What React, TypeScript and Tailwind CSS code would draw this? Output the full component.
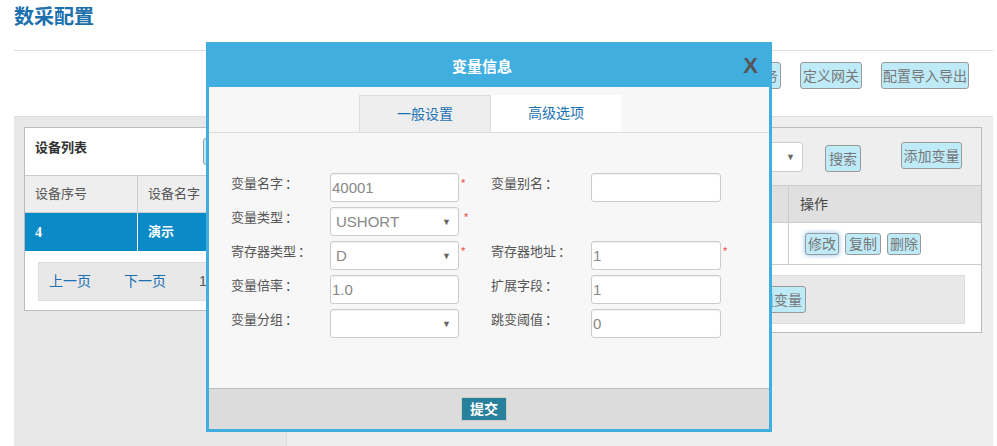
import React from "react";

const font = "font-['Liberation_Sans','Noto_Sans_CJK_SC',sans-serif]";
const cyanBtn =
  "rounded-[3px] border border-[#999] bg-[#bfeaf7] text-[14px] leading-none text-[#777]";

type Field = {
  label: string;
  value: string;
  select?: boolean;
  required?: boolean;
};

const rows: [Field, Field | null][] = [
  [
    { label: "变量名字", value: "40001", required: true },
    { label: "变量别名", value: "" },
  ],
  [{ label: "变量类型", value: "USHORT", select: true, required: true }, null],
  [
    { label: "寄存器类型", value: "D", select: true, required: true },
    { label: "寄存器地址", value: "1", required: true },
  ],
  [
    { label: "变量倍率", value: "1.0" },
    { label: "扩展字段", value: "1" },
  ],
  [
    { label: "变量分组", value: "", select: true },
    { label: "跳变阈值", value: "0" },
  ],
];

function FormCell({ field, labelW, inputW }: { field: Field | null; labelW: string; inputW: string }) {
  if (!field) return <div className={`${labelW} shrink-0`} />;
  return (
    <>
      <div className={`${labelW} shrink-0 pt-[1px] text-[13px] leading-[20px] text-[#555]`}>
        {field.label}
        <span className="pl-[2px]">：</span>
      </div>
      <div
        className={`relative flex h-[29px] ${inputW} shrink-0 items-center rounded-[3px] border border-[#ccc] bg-white shadow-[inset_0_1px_1px_rgba(0,0,0,0.06)] ${
          field.select ? "pl-[5px]" : "pl-[1px]"
        } text-[15px] leading-none text-[#888]`}
      >
        {field.value}
        {field.select && (
          <span className="absolute right-[7px] top-[10px] text-[9px] leading-none text-[#666]">▼</span>
        )}
      </div>
    </>
  );
}

function Modal() {
  return (
    <div className="absolute left-[206px] top-[42px] flex h-[390px] w-[566px] flex-col border-[3px] border-[#41aee0]">
      <div className="relative flex h-[42px] shrink-0 items-center justify-center bg-[#41aee0] pr-[14px]">
        <span className="text-[15px] font-bold leading-none text-white">变量信息</span>
        <span className="absolute right-[11px] top-[10px] text-[22px] font-bold leading-none text-[#555]">
          X
        </span>
      </div>
      <div className="flex-1 bg-[#f7f7f7] pt-[8px]">
        <div className="flex border-b border-[#ddd] pl-[150px]">
          <div className="flex h-[37px] w-[132px] items-center justify-center border border-b-0 border-[#ddd] bg-[#eeeeee] text-[14px] text-[#1b72b5]">
            一般设置
          </div>
          <div className="flex h-[37px] w-[130px] items-center justify-center bg-white text-[14px] text-[#1b72b5]">
            高级选项
          </div>
        </div>
        <div className="mt-[40px] flex flex-col gap-[5px] pl-[22px]">
          {rows.map(([l, r], i) => (
            <div key={i} className="flex h-[29px] items-start">
              <FormCell field={l} labelW="w-[99px]" inputW="w-[129px]" />
              <div className={`w-[32px] shrink-0 ${l?.select && i === 1 ? "pl-[5px]" : "pl-[2px]"} pt-[5px] text-[11px] leading-none text-[#e44]`}>
                {l?.required ? "*" : ""}
              </div>
              <FormCell field={r} labelW="w-[100px]" inputW="w-[130px]" />
              <div className="pl-[2px] pt-[5px] text-[11px] leading-none text-[#e44]">
                {r?.required ? "*" : ""}
              </div>
            </div>
          ))}
        </div>
      </div>
      <div className="flex h-[41px] shrink-0 justify-center border-t border-[#bbb] bg-[#dcdcdc] pr-[10px] pt-[8px]">
        <button className="h-[24px] w-[46px] border border-[#ccc] bg-[#27819c] text-[14px] font-bold leading-none text-white">
          提交
        </button>
      </div>
    </div>
  );
}

export default function App() {
  return (
    <div className={`relative h-[446px] w-[997px] overflow-hidden bg-white ${font}`}>
      <h1 className="px-[14px] pt-[3px] text-[20px] font-bold leading-[28px] text-[#1a6fac]">数采配置</h1>
      <div className="ml-[14px] mr-[4px] mt-[19px] border-t border-[#ddd]" />
      <div className="flex h-[65px] items-start justify-end gap-[19px] pr-[28px] pt-[11px]">
        <button className={`${cyanBtn} h-[27px] w-[62px]`}>定义任务</button>
        <button className={`${cyanBtn} h-[27px] w-[62px]`}>定义网关</button>
        <button className={`${cyanBtn} h-[27px] w-[88px]`}>配置导入导出</button>
      </div>

      <div className="ml-[14px] mr-[4px] flex h-[330px] border-t border-[#ddd]">
        {/* device list */}
        <div className="w-[273px] shrink-0 border-r border-[#ddd] bg-[#e8e8e8] px-[10px] pt-[10px]">
          <div className="border border-[#bbb] bg-white">
            <div className="flex h-[47px] items-start justify-between pl-[10px] pr-[8px]">
              <span className="pt-[10px] text-[13px] font-bold leading-[20px] text-[#333]">设备列表</span>
              <button className={`${cyanBtn} mt-[10px] h-[27px] px-[3px]`}>添加设备</button>
            </div>
            <div className="flex h-[38px] border-y border-[#ccc] bg-[#eeeeee] text-[13px] text-[#555]">
              <div className="flex w-[113px] items-center border-r border-[#ccc] pl-[10px]">设备序号</div>
              <div className="flex flex-1 items-center pl-[10px]">设备名字</div>
            </div>
            <div className="flex h-[38px] bg-[#0a8ac6] text-[13px] font-bold text-white">
              <div className="flex w-[113px] items-center border-r border-white pl-[10px] font-['Liberation_Serif',serif] text-[14px]">
                4
              </div>
              <div className="flex flex-1 items-center pl-[10px]">演示</div>
            </div>
            <div className="px-[13px] pb-[9px] pt-[11px]">
              <div className="flex h-[39px] items-center gap-[33px] border border-[#ddd] bg-[#e8e8e8] pl-[10px] text-[14px]">
                <span className="text-[#1a6fb0]">上一页</span>
                <span className="text-[#1a6fb0]">下一页</span>
                <span className="text-[#555]">1/1</span>
              </div>
            </div>
          </div>
        </div>

        {/* variables */}
        <div className="flex-1 bg-[#eeeeee] pl-[9px] pr-[11px] pt-[10px]">
          <div className="border border-[#bbb]">
            <div className="flex h-[57px] items-start justify-end pr-[19px]">
              <div className="relative mt-[14px] h-[30px] w-[160px] rounded-[3px] border border-[#ccc] bg-white">
                <span className="absolute right-[7px] top-[10px] text-[9px] leading-none text-[#666]">▼</span>
              </div>
              <button className={`${cyanBtn} ml-[22px] mt-[17px] h-[27px] w-[36px]`}>搜索</button>
              <button className={`${cyanBtn} ml-[40px] mt-[14px] h-[27px] w-[61px]`}>添加变量</button>
            </div>
            <div className="flex h-[38px] border-y border-[#ccc] bg-[#e0e0e0] text-[14px] text-[#444]">
              <div className="flex flex-1 items-center border-r border-[#ccc] pl-[10px]">变量名字</div>
              <div className="flex w-[192px] items-center pl-[11px]">操作</div>
            </div>
            <div className="flex h-[42px] border-b border-[#ccc] bg-white">
              <div className="flex-1 border-r border-[#ccc]" />
              <div className="flex w-[192px] items-start gap-[6px] pl-[16px] pt-[10px]">
                <button className={`${cyanBtn} h-[22px] w-[34px] shadow-[0_0_5px_rgba(60,150,230,0.6)]`}>修改</button>
                <button className={`${cyanBtn} h-[22px] w-[36px]`}>复制</button>
                <button className={`${cyanBtn} h-[22px] w-[34px]`}>删除</button>
              </div>
            </div>
            <div className="bg-white px-[16px] pb-[8px] pt-[10px]">
              <div className="flex h-[49px] items-start justify-end border border-[#ddd] bg-[#e8e8e8] pr-[158px] pt-[10px]">
                <button className={`${cyanBtn} h-[27px] px-[3px]`}>添加组变量</button>
              </div>
            </div>
          </div>
        </div>
      </div>

      <Modal />
    </div>
  );
}
